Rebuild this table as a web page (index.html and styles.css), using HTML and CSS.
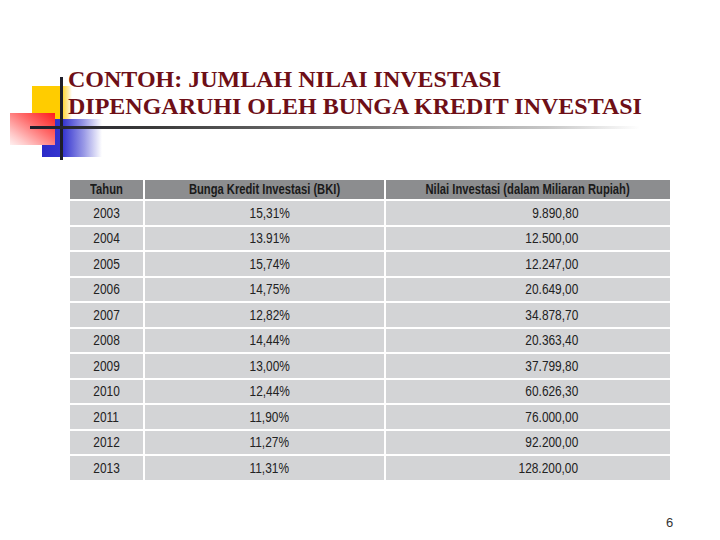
FILE: index.html
```html
<!DOCTYPE html>
<html>
<head>
<meta charset="utf-8">
<link rel="stylesheet" href="styles.css">
</head>
<body>
<div class="slide">
  <div class="deco">
    <div class="sq yellow"></div>
    <div class="sq blue"></div>
    <div class="sq red"></div>
    <div class="vline"></div>
    <div class="hline"></div>
  </div>
  <h1 class="title">CONTOH: JUMLAH NILAI INVESTASI<br>DIPENGARUHI OLEH BUNGA KREDIT INVESTASI</h1>
  <table class="data">
    <colgroup><col class="c1"><col class="c2"><col class="c3"></colgroup>
    <thead>
      <tr><th><span>Tahun</span></th><th><span>Bunga Kredit Investasi (BKI)</span></th><th><span>Nilai Investasi (dalam Miliaran Rupiah)</span></th></tr>
    </thead>
    <tbody>
      <tr><td><span>2003</span></td><td class="p"><span>15,31%</span></td><td class="v"><span>9.890,80</span></td></tr>
      <tr><td><span>2004</span></td><td class="p"><span>13.91%</span></td><td class="v"><span>12.500,00</span></td></tr>
      <tr><td><span>2005</span></td><td class="p"><span>15,74%</span></td><td class="v"><span>12.247,00</span></td></tr>
      <tr><td><span>2006</span></td><td class="p"><span>14,75%</span></td><td class="v"><span>20.649,00</span></td></tr>
      <tr><td><span>2007</span></td><td class="p"><span>12,82%</span></td><td class="v"><span>34.878,70</span></td></tr>
      <tr><td><span>2008</span></td><td class="p"><span>14,44%</span></td><td class="v"><span>20.363,40</span></td></tr>
      <tr><td><span>2009</span></td><td class="p"><span>13,00%</span></td><td class="v"><span>37.799,80</span></td></tr>
      <tr><td><span>2010</span></td><td class="p"><span>12,44%</span></td><td class="v"><span>60.626,30</span></td></tr>
      <tr><td><span>2011</span></td><td class="p"><span>11,90%</span></td><td class="v"><span>76.000,00</span></td></tr>
      <tr><td><span>2012</span></td><td class="p"><span>11,27%</span></td><td class="v"><span>92.200,00</span></td></tr>
      <tr><td><span>2013</span></td><td class="p"><span>11,31%</span></td><td class="v"><span>128.200,00</span></td></tr>
    </tbody>
  </table>
  <div class="page">6</div>
</div>
</body>
</html>
```
FILE: styles.css
```css
html, body { margin: 0; padding: 0; background: #fff; }
.slide {
  position: relative;
  width: 720px;
  height: 540px;
  overflow: hidden;
  background: #fff;
}
.deco { position: absolute; left: 0; top: 0; width: 720px; height: 170px; }
.sq { position: absolute; }
.yellow {
  left: 32px; top: 86px; width: 40px; height: 33px;
  background: linear-gradient(to right, #ffcc00 0%, #ffcc00 70%, #ffe9a0 90%, #ffffff 100%);
}
.blue {
  left: 42px; top: 119px; width: 60px; height: 38px;
  background: linear-gradient(to right, #2a2ac8 0%, #3535d0 35%, #9a9ae6 70%, #ffffff 100%);
}
.red {
  left: 10px; top: 113px; width: 45px; height: 32px;
  background: linear-gradient(to bottom left, #ff1a1a 0%, #ff6a6a 40%, #ffc8c8 80%, #fff0f0 100%);
}
.vline {
  position: absolute; left: 60px; top: 77px; width: 3px; height: 83px;
  background: #1e1e2a;
}
.hline {
  position: absolute; left: 30px; top: 126px; width: 610px; height: 3px;
  background: linear-gradient(to right, #1e1e2a 0%, #3a3a3a 20%, #808080 55%, #c8c8c8 85%, #ffffff 100%);
}
.title {
  position: relative;
  margin: 0;
  padding: 66px 0 0 68px;
  font-family: "Liberation Serif", "Times New Roman", serif;
  font-weight: bold;
  font-size: 24px;
  line-height: 27px;
  color: #6e0f17;
}
.data {
  margin: 58px 0 0 68px;
  width: 604px;
  table-layout: fixed;
  border-collapse: separate;
  border-spacing: 2px;
  font-family: "Liberation Sans", Arial, sans-serif;
}
.data col.c1 { width: 73px; }
.data col.c2 { width: 239px; }
.data col.c3 { width: 284px; }
.data th, .data td { box-sizing: border-box; padding: 0; white-space: nowrap; }
.data th {
  background: #8c8d8f;
  color: #1a1a1a;
  font-weight: bold;
  font-size: 14px;
  height: 19px;
  line-height: 19px;
  text-align: center;
}
.data th span { display: inline-block; transform: scaleX(0.8); transform-origin: center; }
.data td {
  background: #d3d4d6;
  color: #222;
  font-size: 14px;
  height: 23.5px;
  text-align: center;
}
.data td span { display: inline-block; transform: scaleX(0.85); transform-origin: center; }
.data td.p { padding-left: 10px; }
.data td.v { text-align: right; padding-right: 92px; }
.data td.v span { transform-origin: right center; }
.page {
  position: absolute;
  left: 666px; top: 515px;
  font-family: "Liberation Sans", Arial, sans-serif;
  font-size: 13px;
  color: #333;
}
```
